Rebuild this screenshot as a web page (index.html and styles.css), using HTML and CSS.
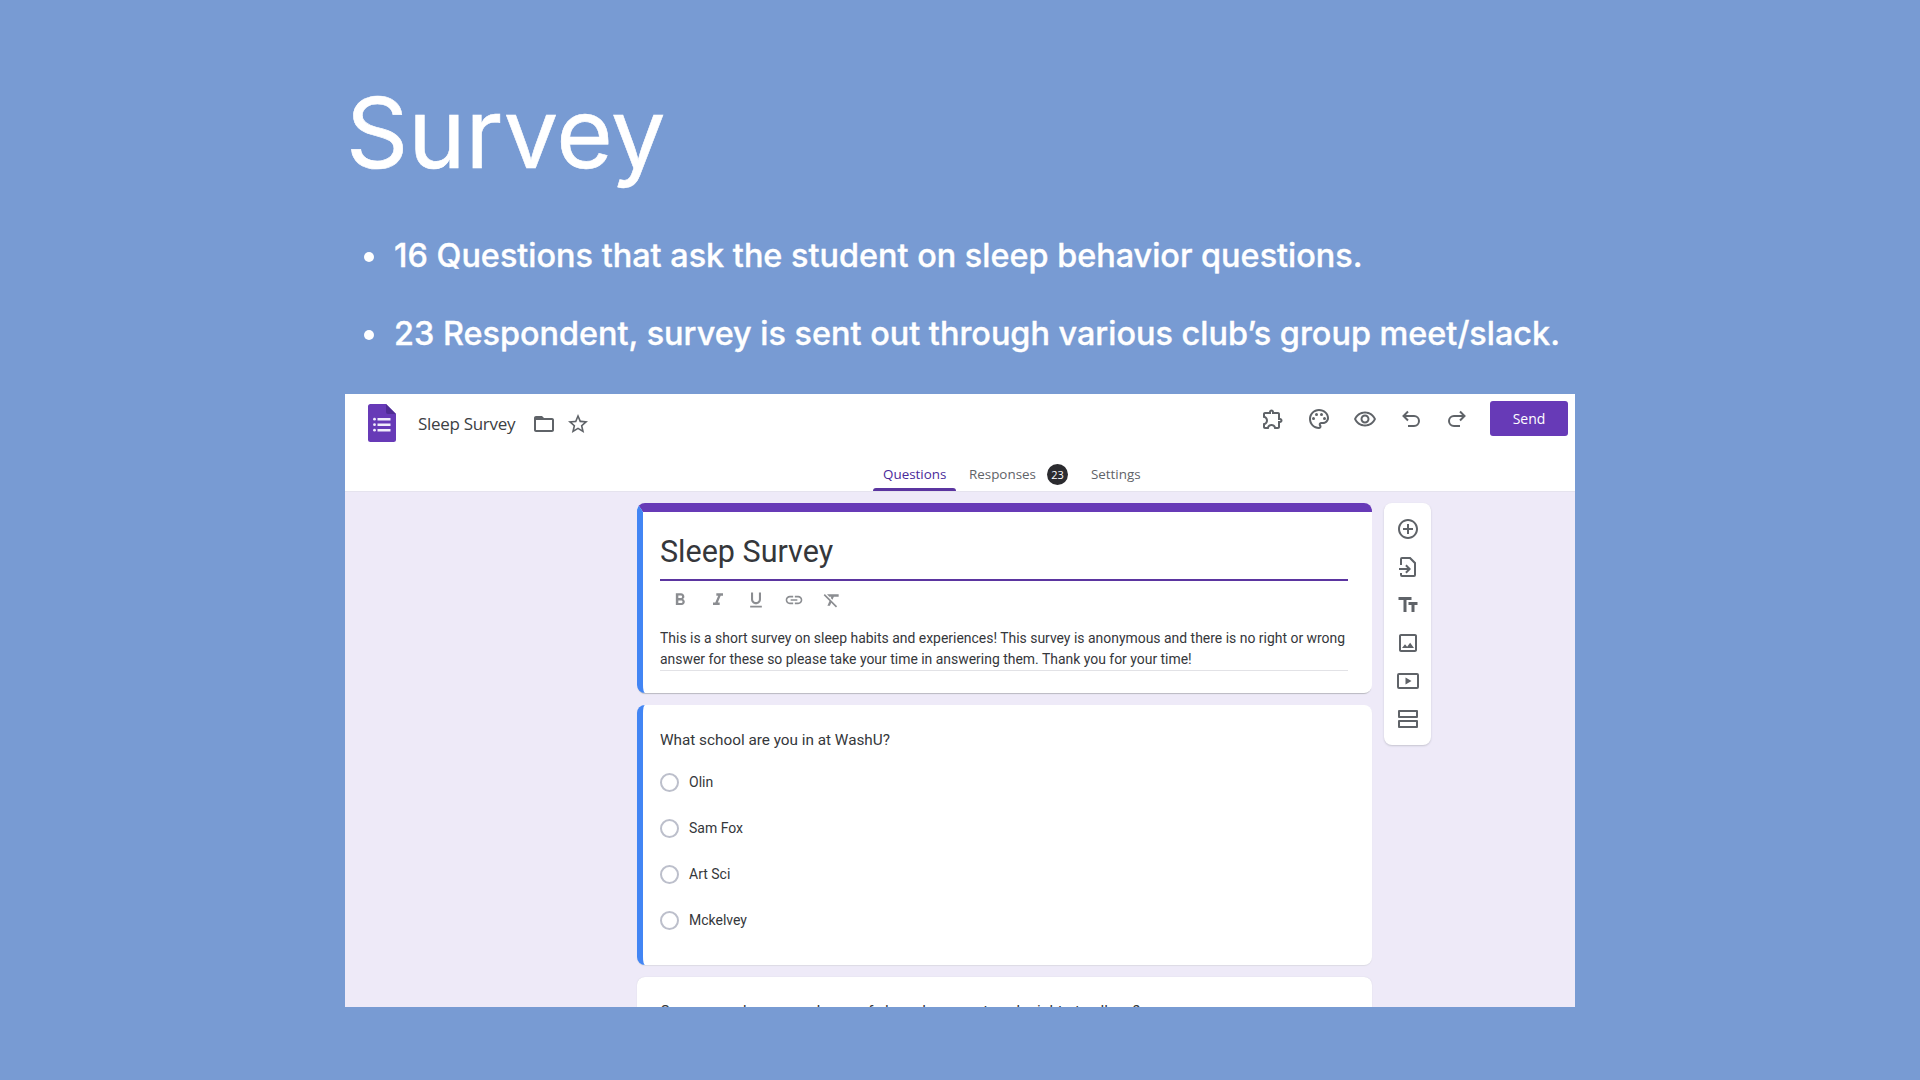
FILE: index.html
```html
<!DOCTYPE html>
<html lang="en">
<head>
<meta charset="utf-8">
<title>Survey</title>
<link rel="stylesheet" href="styles.css">
</head>
<body>
<main class="slide">
  <h1 class="slide-title">Survey</h1>
  <ul class="points">
    <li>16 Questions that ask the student on sleep behavior questions.</li>
    <li>23 Respondent, survey is sent out through various club’s group meet/slack.</li>
  </ul>
  <section class="shot">
    <header class="top">
      <div class="bar">
        <svg class="logo" viewBox="0 0 28 38"><path fill="#673ab7" d="M2.5 0H18l10 10v25.500a2.500 2.500 0 0 1-2.500 2.500h-23A2.500 2.500 0 0 1 0 35.500v-33A2.500 2.500 0 0 1 2.500 0z"/><path fill="#4f2c94" d="M18 0l10 10H20a2 2 0 0 1-2-2z"/><path fill="#f1edfb" d="M9.500 14h13v2.500h-13zM9.500 19.500h13V22h-13zM9.500 25h13v2.500h-13z"/><circle cx="6.500" cy="15.200" r="1.400" fill="#f1edfb"/><circle cx="6.500" cy="20.700" r="1.400" fill="#f1edfb"/><circle cx="6.500" cy="26.200" r="1.400" fill="#f1edfb"/></svg>
        <span class="doc-name">Sleep Survey</span>
        <svg class="ic ic-folder" viewBox="0 0 24 24"><path d="M20 6h-8l-2-2H4c-1.100 0-1.990.9-1.990 2L2 18c0 1.100.9 2 2 2h16c1.100 0 2-.9 2-2V8c0-1.100-.9-2-2-2zm0 12H4V8h16v10z"/></svg>
        <svg class="ic ic-star" viewBox="0 0 24 24"><path d="M22 9.240l-7.190-.62L12 2 9.190 8.630 2 9.240l5.460 4.730L5.820 21 12 17.270 18.180 21l-1.630-7.030L22 9.240zM12 15.400l-3.760 2.270 1-4.280-3.320-2.880 4.380-.38L12 6.100l1.710 4.040 4.380.38-3.320 2.880 1 4.280L12 15.400z"/></svg>
        <div class="actions">
          <svg class="ic" viewBox="0 0 24 24"><path d="M10.500 4.500c.28 0 .5.22.5.5v2h6v6h2c.28 0 .5.22.5.5s-.22.5-.5.5h-2v6h-2.120c-.68-1.750-2.390-3-4.380-3s-3.700 1.250-4.380 3H4v-2.120c1.750-.68 3-2.390 3-4.380 0-1.990-1.240-3.700-2.990-4.380L4 7h6V5c0-.28.22-.5.5-.5m0-2C9.120 2.500 8 3.620 8 5H4c-1.100 0-1.990.9-1.990 2v3.800h.29c1.490 0 2.700 1.210 2.700 2.700s-1.210 2.700-2.700 2.700H2V20c0 1.100.9 2 2 2h3.800v-.3c0-1.490 1.210-2.700 2.700-2.700 1.490 0 2.700 1.210 2.700 2.700v.3H17c1.100 0 2-.9 2-2v-4c1.380 0 2.500-1.120 2.500-2.500S20.380 11 19 11V7c0-1.100-.9-2-2-2h-4c0-1.380-1.120-2.500-2.500-2.500z"/></svg>
          <svg class="ic" viewBox="0 0 24 24"><path d="M12 22C6.490 22 2 17.510 2 12S6.490 2 12 2s10 4.040 10 9c0 3.310-2.690 6-6 6h-1.770c-.28 0-.5.22-.5.5 0 .12.05.23.13.33.41.47.64 1.060.64 1.670 0 1.380-1.120 2.500-2.500 2.500zm0-18c-4.410 0-8 3.590-8 8s3.590 8 8 8c.28 0 .5-.22.5-.5 0-.16-.08-.28-.14-.35-.41-.46-.63-1.050-.63-1.650 0-1.380 1.120-2.500 2.500-2.500H16c2.210 0 4-1.790 4-4 0-3.860-3.590-7-8-7z"/><circle cx="6.500" cy="11.500" r="1.500"/><circle cx="9.500" cy="7.500" r="1.500"/><circle cx="14.500" cy="7.500" r="1.500"/><circle cx="17.500" cy="11.500" r="1.500"/></svg>
          <svg class="ic" viewBox="0 0 24 24"><path d="M12 6.500c3.790 0 7.170 2.130 8.820 5.500-1.650 3.370-5.020 5.500-8.820 5.500S4.830 15.370 3.180 12C4.830 8.630 8.210 6.500 12 6.500m0-2C7 4.500 2.730 7.610 1 12c1.730 4.390 6 7.500 11 7.500s9.270-3.110 11-7.500c-1.730-4.390-6-7.500-11-7.500zm0 5c1.380 0 2.500 1.120 2.500 2.500s-1.120 2.500-2.500 2.500-2.500-1.120-2.500-2.500 1.120-2.500 2.500-2.500m0-2c-2.480 0-4.500 2.020-4.500 4.500s2.020 4.500 4.500 4.500 4.500-2.020 4.500-4.500-2.020-4.500-4.500-4.500z"/></svg>
          <svg class="ic ic-line" viewBox="0 0 24 24"><path d="M9 4.500 4.500 9 9 13.500M4.500 9H15a5 5 0 0 1 0 10H9"/></svg>
          <svg class="ic ic-line" viewBox="0 0 24 24"><path d="M15 4.500 19.500 9 15 13.500M19.500 9H9a5 5 0 0 0 0 10h6"/></svg>
          <button class="send" type="button">Send</button>
        </div>
      </div>
      <nav class="tabs">
        <a class="tab tab-on">Questions</a>
        <a class="tab">Responses<span class="badge">23</span></a>
        <a class="tab">Settings</a>
      </nav>
    </header>
    <div class="canvas">
      <div class="column">
        <article class="card card-head">
          <h2 class="form-title">Sleep Survey</h2>
          <div class="format">
            <svg class="fm" viewBox="0 0 24 24"><path d="M15.600 10.790c.97-.67 1.650-1.770 1.650-2.790 0-2.260-1.750-4-4-4H7v14h7.040c2.090 0 3.710-1.700 3.710-3.790 0-1.520-.86-2.820-2.150-3.420zM10 6.500h3c.83 0 1.500.67 1.500 1.500s-.67 1.500-1.500 1.500h-3v-3zm3.500 9H10v-3h3.500c.83 0 1.500.67 1.500 1.500s-.67 1.500-1.500 1.500z"/></svg>
            <svg class="fm" viewBox="0 0 24 24"><path d="M10 4v3h2.210l-3.420 8H6v3h8v-3h-2.210l3.420-8H18V4z"/></svg>
            <svg class="fm" viewBox="0 0 24 24"><path d="M12 17c3.310 0 6-2.690 6-6V3h-2.500v8c0 1.930-1.570 3.500-3.500 3.500S8.500 12.930 8.500 11V3H6v8c0 3.310 2.690 6 6 6zm-7 2v2h14v-2H5z"/></svg>
            <svg class="fm" viewBox="0 0 24 24"><path d="M3.900 12c0-1.710 1.390-3.100 3.100-3.100h4V7H7c-2.760 0-5 2.240-5 5s2.240 5 5 5h4v-1.900H7c-1.710 0-3.100-1.390-3.100-3.100zM8 13h8v-2H8v2zm9-6h-4v1.900h4c1.710 0 3.100 1.390 3.100 3.100s-1.390 3.100-3.100 3.100h-4V17h4c2.760 0 5-2.240 5-5s-2.240-5-5-5z"/></svg>
            <svg class="fm" viewBox="0 0 24 24"><path d="M6 5v.18L8.820 8h2.400l-.72 1.680 2.100 2.100L14.210 8H20V5H6zM3.410 4.860L2 6.270l6.970 6.970L6.500 19h3l1.570-3.660L16.730 21l1.410-1.410L3.410 4.860z"/></svg>
          </div>
          <p class="desc">This is a short survey on sleep habits and experiences! This survey is anonymous and there is no right or wrong answer for these so please take your time in answering them. Thank you for your time!</p>
        </article>
        <article class="card card-q">
          <h3 class="question">What school are you in at WashU?</h3>
          <label class="option"><span class="radio"></span>Olin</label>
          <label class="option"><span class="radio"></span>Sam Fox</label>
          <label class="option"><span class="radio"></span>Art Sci</label>
          <label class="option"><span class="radio"></span>Mckelvey</label>
        </article>
        <article class="card card-next">
          <h3 class="question">On average, how many hours of sleep do you get each night at college?</h3>
        </article>
      </div>
      <aside class="tools">
        <svg class="tool" viewBox="0 0 24 24"><path d="M13 7h-2v4H7v2h4v4h2v-4h4v-2h-4V7zm-1-5C6.480 2 2 6.480 2 12s4.480 10 10 10 10-4.480 10-10S17.520 2 12 2zm0 18c-4.410 0-8-3.590-8-8s3.590-8 8-8 8 3.590 8 8-3.590 8-8 8z"/></svg>
        <svg class="tool" viewBox="0 0 24 24"><path d="M6 2h8.500L20 7.500V20a2 2 0 0 1-2 2H6a2 2 0 0 1-2-2v-2h2v2h12V8.500L13.500 4H6v6H4V4a2 2 0 0 1 2-2z"/><path d="M3 13h8.200l-2-2 1.400-1.400L15 14l-4.400 4.400L9.200 17l2-2H3z"/></svg>
        <svg class="tool" viewBox="0 0 24 24"><path d="M2.500 4v3h5v12h3V7h5V4h-13zm19 5h-9v3h3v7h3v-7h3V9z"/></svg>
        <svg class="tool" viewBox="0 0 24 24"><path d="M19 5v14H5V5h14m0-2H5c-1.100 0-2 .9-2 2v14c0 1.100.9 2 2 2h14c1.100 0 2-.9 2-2V5c0-1.100-.9-2-2-2zm-4.860 8.860l-3 3.870L9 13.140 6 17h12l-3.860-5.140z"/></svg>
        <svg class="tool" viewBox="0 0 24 24"><path d="M3 4h18a2 2 0 0 1 2 2v12a2 2 0 0 1-2 2H3a2 2 0 0 1-2-2V6a2 2 0 0 1 2-2zm0 2v12h18V6H3z"/><path d="M9.500 8.500v7l6-3.500z"/></svg>
        <svg class="tool" viewBox="0 0 24 24"><path d="M3 3h18a1 1 0 0 1 1 1v6a1 1 0 0 1-1 1H3a1 1 0 0 1-1-1V4a1 1 0 0 1 1-1zm1 2v4h16V5H4zM3 13h18a1 1 0 0 1 1 1v6a1 1 0 0 1-1 1H3a1 1 0 0 1-1-1v-6a1 1 0 0 1 1-1zm1 2v4h16v-4H4z"/></svg>
      </aside>
    </div>
  </section>
</main>
</body>
</html>
```
FILE: styles.css
```css
* { box-sizing: border-box; }
html, body { margin: 0; height: 100%; }
body { background: #789bd3; overflow: hidden; }

.slide {
  width: 1920px;
  height: 1080px;
  padding: 0 345px;
  background: #789bd3;
  color: #fff;
  font-family: Inter, "Liberation Sans", sans-serif;
}
.slide-title {
  margin: 0;
  padding: 75px 0 0 1px;
  height: 235px;
  font-size: 97px;
  line-height: 116px;
  font-weight: 400;
  -webkit-text-stroke: .6px #fff;
}
.points {
  list-style: none;
  margin: 0;
  padding: 0 0 0 49px;
  height: 159px;
  font-size: 32.400px;
  font-weight: 500;
  line-height: 41px;
  white-space: nowrap;
  -webkit-text-stroke: .35px #fff;
}
.points li { position: relative; margin-bottom: 37px; }
.points li::before {
  content: "";
  position: absolute;
  left: -30px;
  top: 17px;
  width: 10px;
  height: 10px;
  border-radius: 50%;
  background: #fff;
}

.shot {
  width: 1230px;
  height: 613px;
  background: #eeeaf8;
  overflow: hidden;
  color: #3c4043;
  font-family: Roboto, Arial, sans-serif;
}
.top {
  height: 98px;
  background: #fff;
  border-bottom: 1px solid #e5e3ee;
}
.bar {
  height: 59px;
  display: flex;
  align-items: flex-start;
  padding: 10px 7px 0 23px;
}
.logo { width: 28px; height: 38px; flex: none; }
.doc-name {
  margin-left: 22px;
  margin-top: 8px;
  font-family: "Open Sans", sans-serif;
  font-size: 17px;
  line-height: 24px;
  letter-spacing: -.3px;
  color: #3c4043;
}
.ic { width: 24px; height: 24px; fill: #5f6368; flex: none; }
.ic-folder { margin-left: 17px; margin-top: 8px; }
.ic-star { margin-left: 10px; margin-top: 8px; }
.ic-line { fill: none; stroke: #5f6368; stroke-width: 2; }
.actions {
  margin-left: auto;
  margin-top: -3px;
  display: flex;
  align-items: center;
  gap: 22px;
}
.send {
  width: 78px;
  height: 35px;
  margin-left: -1px;
  border: 0;
  border-radius: 3px;
  background: #673ab7;
  color: #fff;
  font-family: "Open Sans", sans-serif;
  font-size: 14px;
  font-weight: 500;
}
.tabs {
  height: 38px;
  display: flex;
  gap: 3px;
  padding-left: 528px;
  font-family: "Open Sans", sans-serif;
  font-size: 13.400px;
  color: #5f6368;
}
.tab {
  position: relative;
  display: flex;
  align-items: center;
  padding: 0 10px;
  height: 42px;
}
.tab-on { color: #4a2a9a; width: 83px; }
.tab-on::after {
  content: "";
  position: absolute;
  left: 0;
  right: 0;
  top: 35px;
  height: 3px;
  border-radius: 3px 3px 0 0;
  background: #5b35a0;
}
.badge {
  width: 21px;
  height: 21px;
  margin-left: 11px;
  border-radius: 50%;
  background: #2b2b2f;
  color: #fff;
  font-size: 11px;
  line-height: 21px;
  text-align: center;
}

.canvas {
  display: flex;
  align-items: flex-start;
  gap: 12px;
  padding: 11px 0 0 292px;
}
.column { width: 735px; display: flex; flex-direction: column; gap: 12px; }
.card {
  background: #fff;
  border-radius: 8px;
  border-left: 6px solid #4285f4;
  padding-left: 17px;
  padding-right: 24px;
}
.card-head {
  height: 190px;
  border-top: 9px solid #673ab7;
  box-shadow: 0 2px 1px -1px #b9b9c0;
}
.form-title {
  margin: 0;
  height: 69px;
  padding-top: 22px;
  font-size: 30.500px;
  line-height: 36px;
  font-weight: 400;
  border-bottom: 2px solid #5b35a0;
  color: #35373b;
}
.format {
  height: 38px;
  display: flex;
  align-items: center;
  gap: 18px;
  padding-left: 10px;
}
.fm { width: 20px; height: 20px; fill: #8b8d91; flex: none; }
.desc {
  margin: 9px 0 0;
  padding-bottom: 0;
  font-size: 13.950px;
  line-height: 21px;
  color: #35373b;
  border-bottom: 1px solid #e2e2e6;
}
.card-q {
  height: 260px;
  padding-top: 24px;
  box-shadow: 0 1px 1px #dcdbe4;
}
.question {
  margin: 0;
  font-size: 15.300px;
  line-height: 22px;
  font-weight: 400;
  color: #35373b;
  height: 30px;
}
.option {
  display: flex;
  align-items: center;
  gap: 10px;
  height: 46px;
  font-size: 14px;
  color: #35373b;
}
.radio {
  width: 19px;
  height: 19px;
  border: 2px solid #bcbfcb;
  border-radius: 50%;
  flex: none;
}
.card-next {
  height: 120px;
  border-left: 0;
  padding: 23px 24px 0 23px;
  box-shadow: 0 0 1px #c9c8d6;
}
.tools {
  width: 47px;
  height: 242px;
  background: #fff;
  border-radius: 8px;
  box-shadow: 0 1px 2px #c5c4d0;
  display: flex;
  flex-direction: column;
  align-items: center;
  gap: 14px;
  padding-top: 14px;
}
.tool { width: 24px; height: 24px; fill: #5f6368; flex: none; }
```
